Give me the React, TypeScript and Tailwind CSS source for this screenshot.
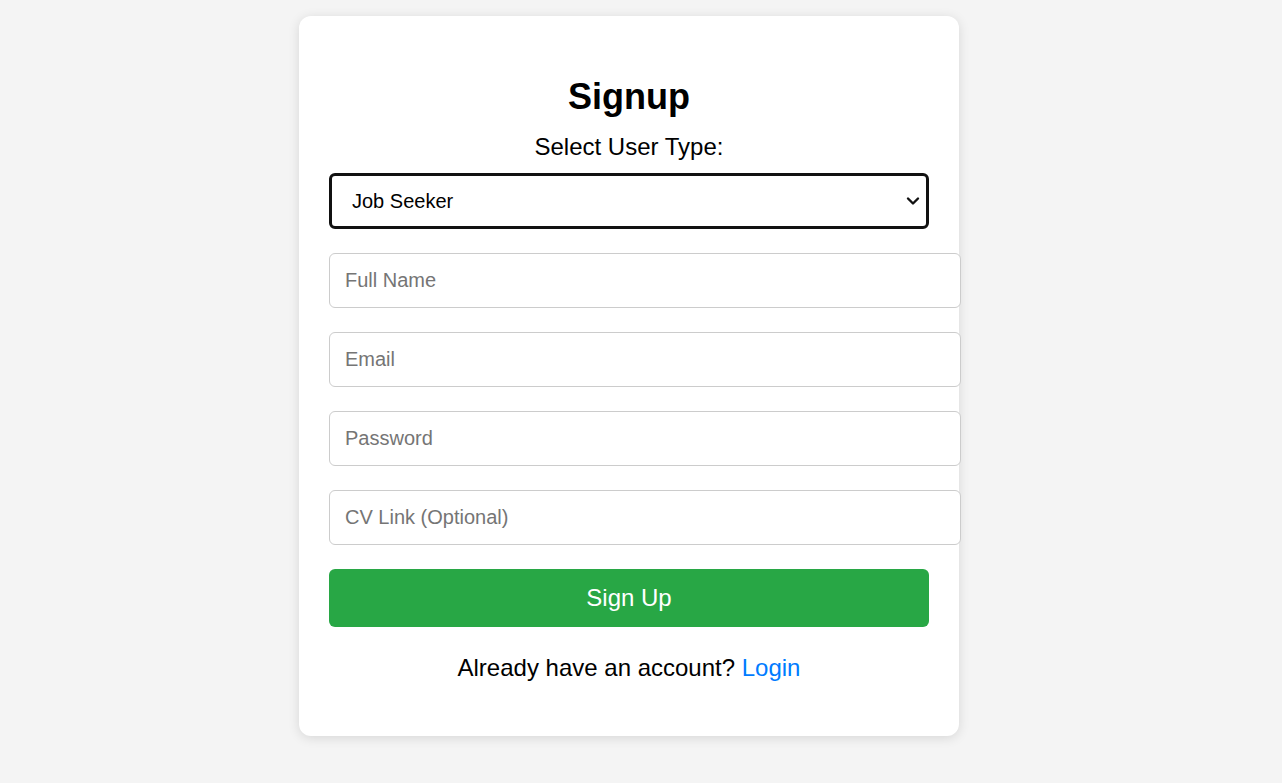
import React from "react";

export default function App() {
  return (
    <div className="min-h-[783px] w-full bg-[#f4f4f4] pt-4 pr-[24px] font-['Liberation_Sans',Arial,sans-serif] text-black">
      <div className="mx-auto w-[660px] rounded-[12px] bg-white px-[30px] pt-[60px] pb-[54px] shadow-[0_2px_12px_rgba(0,0,0,0.12)]">
        <h2 className="text-center text-[36px] font-bold leading-[41px]">Signup</h2>
        <label className="mt-[16px] block text-center text-[24px] leading-[28px]">Select User Type:</label>
        <div className="relative mt-[12px] w-[600px]">
          <select
            defaultValue="seeker"
            className="block h-[56px] w-[600px] appearance-none rounded-[6px] border-[3px] border-[#111] bg-white pl-[20px] pr-[40px] text-[20px] text-black"
          >
            <option value="seeker">Job Seeker</option>
            <option value="employer">Employer</option>
          </select>
          <svg
            className="pointer-events-none absolute right-[9px] top-[22px]"
            width="14"
            height="12"
            viewBox="0 0 14 12"
            fill="none"
          >
            <path d="M2 3.5 L7 8.5 L12 3.5" stroke="#111" strokeWidth="2.4" strokeLinecap="round" strokeLinejoin="round" />
          </svg>
        </div>

        <div className="mt-[24px] flex flex-col gap-[24px]">
          <Field placeholder="Full Name" />
          <Field placeholder="Email" type="email" />
          <Field placeholder="Password" type="password" />
          <Field placeholder="CV Link (Optional)" />
        </div>

        <button className="mt-[24px] block h-[58px] w-[600px] rounded-[6px] bg-[#28a745] text-[24px] text-white">
          Sign Up
        </button>

        <p className="mt-[27px] text-center text-[24px] leading-[28px]">
          Already have an account? <a className="text-[#007bff]">Login</a>
        </p>
      </div>
    </div>
  );
}

function Field({ placeholder, type = "text" }: { placeholder: string; type?: string }) {
  return (
    <input
      type={type}
      placeholder={placeholder}
      className="block h-[55px] w-[632px] rounded-[6px] border border-[#ccc] bg-white px-[15px] text-[20px] text-black placeholder:text-[#757575]"
    />
  );
}
